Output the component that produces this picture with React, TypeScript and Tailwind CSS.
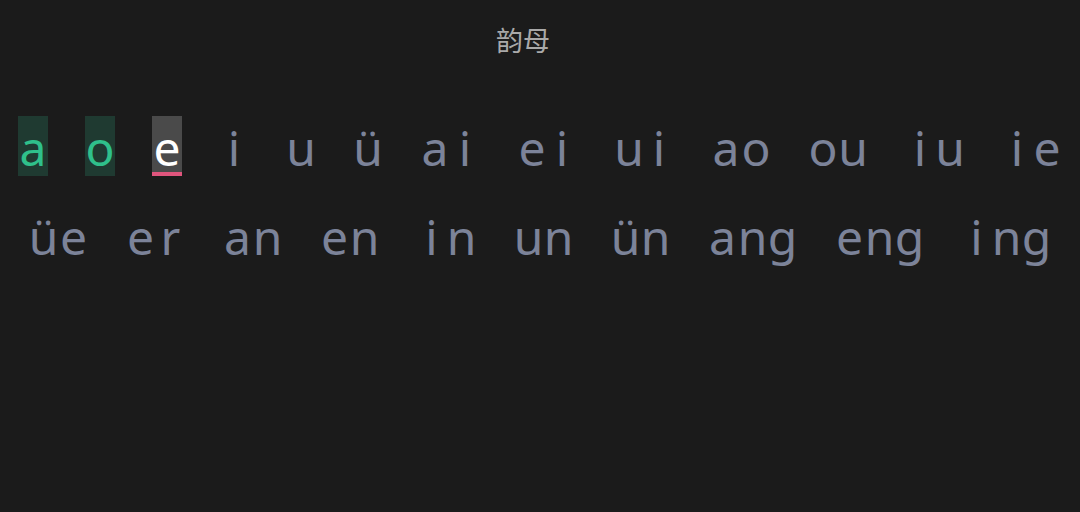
const rows: string[] = [
  "a", "o", "e", "i", "u", "ü", "ai", "ei", "ui", "ao", "ou", "iu", "ie",
  "üe", "er", "an", "en", "in", "un", "ün", "ang", "eng", "ing",
];

// how far the typist got: first two letters done, third is the cursor
const typed = 2;

const App = () => {
  let index = 0;

  return (
    <div className="min-h-screen bg-[#1b1b1b] font-['Noto_Sans','Noto_Sans_CJK_SC',sans-serif]">
      {/* Title */}
      <div className="pt-[20px] pr-[34px] text-center text-[27px] leading-[42px] text-[#a9a9a9]">
        韵母
      </div>

      {/* Letters */}
      <div className="mt-[54px] flex flex-wrap justify-center gap-x-[37px] gap-y-[29px]">
        {rows.map((word) => (
          <div key={word} className="flex">
            {word.split("").map((ch, i) => {
              const pos = index++;
              let cls = "text-[#7c8399]";
              if (pos < typed) cls = "bg-[#1f3a31] text-[#2fc08b]";
              else if (pos === typed)
                cls = "bg-[#4a4a4a] text-white border-b-4 border-[#e0557d]";
              return (
                <span
                  key={i}
                  className={`box-border h-[60px] w-[30px] pt-[2px] text-center text-[48px] leading-[60px] ${cls}`}
                >
                  {ch}
                </span>
              );
            })}
          </div>
        ))}
      </div>
    </div>
  );
};

export default App;
